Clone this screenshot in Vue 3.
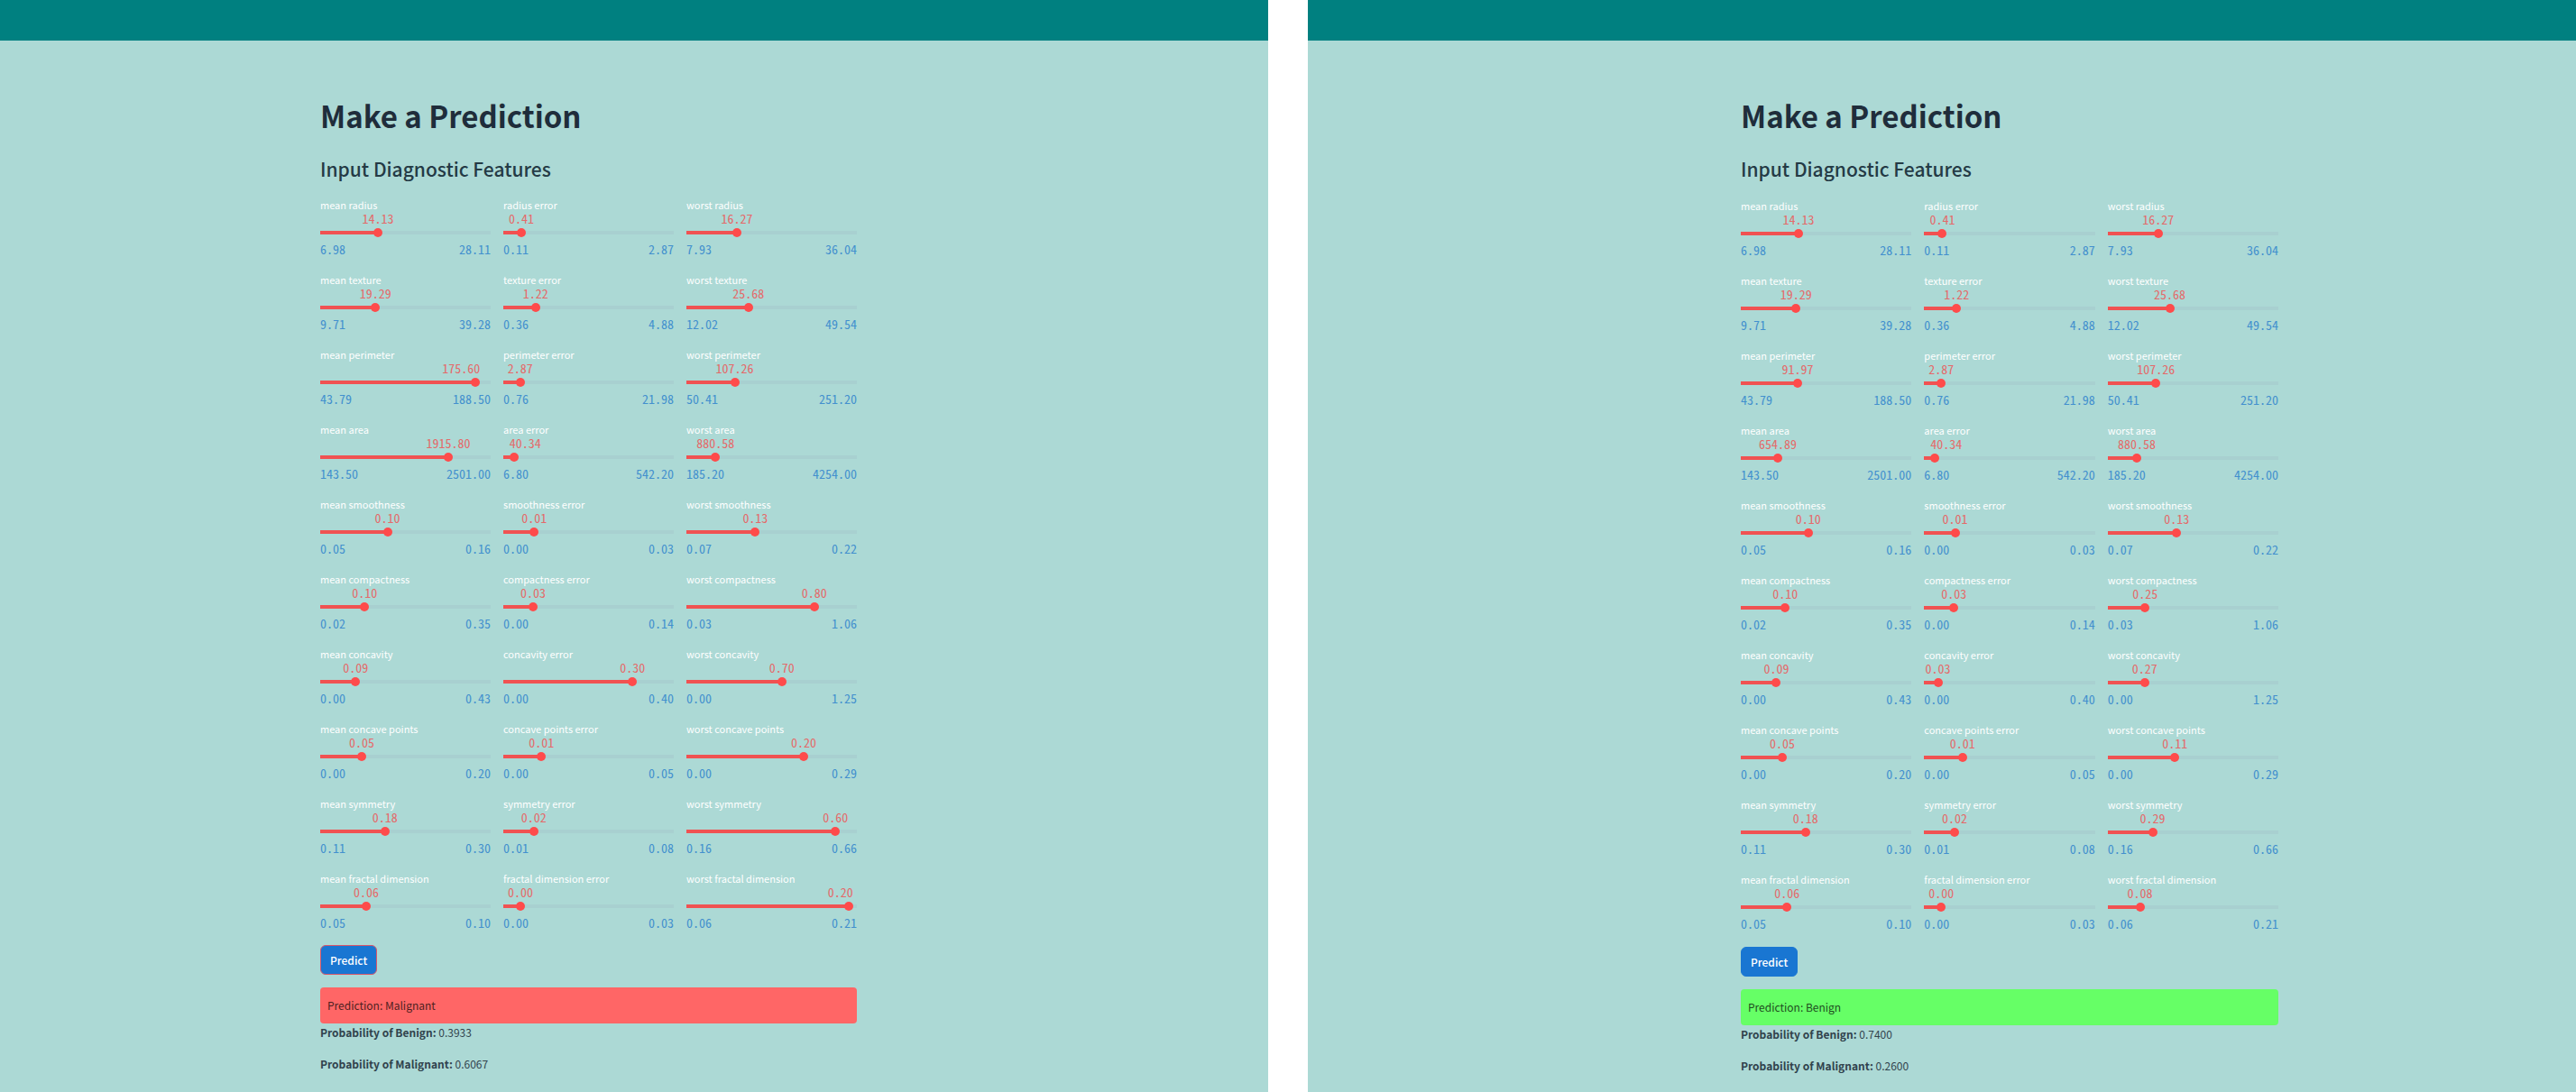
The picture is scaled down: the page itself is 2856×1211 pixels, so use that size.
<script setup>
import { reactive } from 'vue'

const features = [
  ['mean radius', 6.981, 28.11, 14.127],
  ['radius error', 0.1115, 2.873, 0.4052],
  ['worst radius', 7.93, 36.04, 16.269],
  ['mean texture', 9.71, 39.28, 19.29],
  ['texture error', 0.3602, 4.885, 1.2169],
  ['worst texture', 12.02, 49.54, 25.677],
  ['mean perimeter', 43.79, 188.5, 91.969],
  ['perimeter error', 0.757, 21.98, 2.866],
  ['worst perimeter', 50.41, 251.2, 107.261],
  ['mean area', 143.5, 2501, 654.889],
  ['area error', 6.802, 542.2, 40.337],
  ['worst area', 185.2, 4254, 880.583],
  ['mean smoothness', 0.05263, 0.1634, 0.09636],
  ['smoothness error', 0.001713, 0.03113, 0.00704],
  ['worst smoothness', 0.07117, 0.2226, 0.13237],
  ['mean compactness', 0.01938, 0.3454, 0.10434],
  ['compactness error', 0.002252, 0.1354, 0.02548],
  ['worst compactness', 0.02729, 1.058, 0.25427],
  ['mean concavity', 0, 0.4268, 0.0888],
  ['concavity error', 0, 0.396, 0.03189],
  ['worst concavity', 0, 1.252, 0.27219],
  ['mean concave points', 0, 0.2012, 0.04892],
  ['concave points error', 0, 0.05279, 0.0118],
  ['worst concave points', 0, 0.291, 0.11461],
  ['mean symmetry', 0.106, 0.304, 0.18116],
  ['symmetry error', 0.007882, 0.07895, 0.02054],
  ['worst symmetry', 0.1565, 0.6638, 0.29008],
  ['mean fractal dimension', 0.04996, 0.09744, 0.0628],
  ['fractal dimension error', 0.0008948, 0.02984, 0.003795],
  ['worst fractal dimension', 0.05504, 0.2075, 0.08395]
]

const build = (overrides) =>
  features.map(([name, min, max, mean]) => ({ name, min, max, value: overrides[name] ?? mean }))

const panels = reactive([
  {
    id: 'malignant',
    result: 'Malignant',
    benign: '0.3933',
    malignant: '0.6067',
    sliders: build({
      'mean perimeter': 175.6,
      'mean area': 1915.8,
      'worst compactness': 0.8,
      'concavity error': 0.3,
      'worst concavity': 0.7,
      'worst concave points': 0.2,
      'worst symmetry': 0.6,
      'worst fractal dimension': 0.2
    })
  },
  { id: 'benign', result: 'Benign', benign: '0.7400', malignant: '0.2600', sliders: build({}) }
])

const COLUMN = 189
const CHAR = 7

const fmt = (n) => Number(n).toFixed(2)
const ratio = (s) => (s.value - s.min) / (s.max - s.min)

// The value is centred on the thumb; near either end it aligns with the thumb's edge.
const side = (s) => {
  const half = (fmt(s.value).length * CHAR) / 2
  const x = ratio(s) * COLUMN
  if (x < half) return 'from-thumb'
  if (COLUMN - x < half) return 'to-thumb'
  return ''
}
</script>

<template>
  <div class="page">
    <section v-for="p in panels" :key="p.id" class="panel" :class="p.id">
      <header class="topbar"></header>
      <main class="body">
        <div class="content">
          <h1>Make a Prediction</h1>
          <h2>Input Diagnostic Features</h2>
          <div class="sliders">
            <div
              v-for="(s, i) in p.sliders"
              :key="s.name"
              class="slider"
              :style="{ '--pos': ratio(s) * 100 + '%' }"
            >
              <label :for="p.id + i">{{ s.name }}</label>
              <div class="value-row"><output :for="p.id + i" :class="side(s)">{{ fmt(s.value) }}</output></div>
              <input :id="p.id + i" v-model.number="s.value" type="range" :min="s.min" :max="s.max" step="any" />
              <div class="limits"><span>{{ fmt(s.min) }}</span><span>{{ fmt(s.max) }}</span></div>
            </div>
          </div>
          <button type="button">Predict</button>
          <div class="result">Prediction: {{ p.result }}</div>
          <p><strong>Probability of Benign:</strong> {{ p.benign }}</p>
          <p><strong>Probability of Malignant:</strong> {{ p.malignant }}</p>
        </div>
      </main>
    </section>
  </div>
</template>

<style>
body {
  margin: 0;
  background: #fff;
}
</style>

<style scoped>
.page {
  display: grid;
  grid-template-columns: 1fr 1fr;
  column-gap: 44px;
  min-height: 100vh;
  font-family: "Noto Sans CJK SC", "Noto Sans", sans-serif;
  color: #31434d;
}
.panel {
  display: flex;
  flex-direction: column;
  background: #acd9d5;
}
.topbar {
  height: 45px;
  background: #008080;
}
.body {
  display: grid;
  grid-template-columns: 355fr 595fr 456fr;
  padding: 61px 0 20px;
}
.benign .body {
  grid-template-columns: 480fr 596fr 330fr;
}
.content {
  grid-column: 2;
}
h1 {
  margin: 0;
  font-size: 33px;
  line-height: 44px;
  font-weight: 700;
  color: #1f2d3b;
}
h2 {
  margin: 23px 0 18px;
  font-size: 21px;
  line-height: 28px;
  font-weight: 500;
  color: #243a45;
}
.sliders {
  display: grid;
  grid-template-columns: repeat(3, minmax(0, 1fr));
  gap: 18px 14px;
}
.slider {
  display: flex;
  flex-direction: column;
}
label {
  font-size: 11px;
  line-height: 16px;
  color: #fff;
}
.value-row,
.limits {
  font-family: "Noto Sans Mono CJK SC", "DejaVu Sans Mono", monospace;
  font-size: 14px;
}
.value-row {
  position: relative;
  height: 14px;
}
output {
  position: absolute;
  left: var(--pos);
  line-height: 14px;
  color: #e46a6a;
  transform: translateX(-50%);
}
output.from-thumb {
  transform: translateX(-5px);
}
output.to-thumb {
  transform: translateX(calc(-100% + 5px));
}
input {
  appearance: none;
  width: calc(100% + 10px);
  height: 10px;
  margin: 4px -5px 5px;
  background: linear-gradient(to right, #f05252 var(--pos), #a8d0d0 var(--pos)) center / calc(100% - 10px) 4px no-repeat;
}
input::-webkit-slider-thumb {
  appearance: none;
  width: 10px;
  height: 10px;
  border-radius: 50%;
  background: #ff4b4b;
}
.limits {
  display: flex;
  justify-content: space-between;
  line-height: 16px;
  color: #4390ce;
}
button {
  display: block;
  height: 33px;
  margin: 17px 0 14px;
  padding: 0 10px;
  border: 1px solid #1976d2;
  border-radius: 6px;
  background: #1976d2;
  color: #fff;
  font-family: inherit;
  font-size: 12px;
  font-weight: 500;
}
.malignant button {
  border-color: #d8566a;
}
.benign h2 {
  margin-bottom: 19px;
}
.benign button {
  margin-top: 18px;
}
.result {
  padding: 10px 8px;
  border-radius: 4px;
  font-size: 12px;
  line-height: 20px;
}
.malignant .result {
  background: #ff6666;
  color: #4d1f1f;
}
.benign .result {
  background: #66ff66;
  color: #1f4d1f;
}
p {
  margin: 0 0 15px;
  font-size: 12px;
  line-height: 20px;
}
</style>
